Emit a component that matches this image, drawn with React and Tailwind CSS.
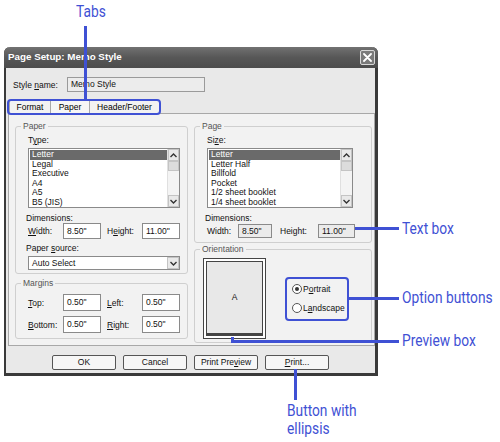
import React from 'react'

const BLUE = 'bg-[#3f51d4]'

function Label({ children, className = '' }) {
  return <span className={`text-[8.5px] leading-[10px] text-[#111] ${className}`}>{children}</span>
}

function Field({ value, w, h = 'h-[16px]', disabled = false }) {
  return (
    <div className={`${w} ${h} flex items-center px-[3px] border border-[#8a8a8a] text-[8.5px] text-[#111] ${disabled ? 'bg-[#ebebeb]' : 'bg-white'}`}>
      {value}
    </div>
  )
}

function Group({ title, className = '', children }) {
  return (
    <div className={`relative border border-[#cfcfcf] rounded-[3px] ${className}`}>
      <span className="absolute -top-[6px] left-[5px] px-[2px] bg-[#f2f2f2] text-[8.5px] leading-[10px] text-[#555]">{title}</span>
      {children}
    </div>
  )
}

function ListBox({ items, w }) {
  return (
    <div className={`${w} h-[60px] flex border border-[#8a8a8a] bg-white`}>
      <div className="flex-1 flex flex-col pt-[1px] pl-[1px]">
        {items.map((it, i) => (
          <div key={it} className={`h-[9.6px] leading-[9.6px] text-[8.5px] pl-[2px] ${i === 0 ? 'bg-[#6a6a6a] text-white' : 'text-[#111]'}`}>{it}</div>
        ))}
      </div>
      <div className="w-[12px] flex flex-col bg-[#f4f4f4] border-l border-[#e0e0e0]">
        <div className="h-[12px] flex items-center justify-center border border-[#c4c4c4] bg-[#e9e9e9]">
          <svg width="7" height="5" viewBox="0 0 7 5"><path d="M0.5 4 L3.5 1 L6.5 4" fill="none" stroke="#333" strokeWidth="1.4" /></svg>
        </div>
        <div className="h-[10px] border border-[#c4c4c4] bg-[#dcdcdc]" />
        <div className="flex-1" />
        <div className="h-[12px] flex items-center justify-center border border-[#c4c4c4] bg-[#e9e9e9]">
          <svg width="7" height="5" viewBox="0 0 7 5"><path d="M0.5 1 L3.5 4 L6.5 1" fill="none" stroke="#333" strokeWidth="1.4" /></svg>
        </div>
      </div>
    </div>
  )
}

function Radio({ checked, children }) {
  return (
    <div className="flex items-center gap-[1px] h-[12px]">
      <div className="w-[10px] h-[10px] rounded-full border border-[#555] bg-white flex items-center justify-center">
        {checked && <div className="w-[4px] h-[4px] rounded-full bg-[#333]" />}
      </div>
      <Label>{children}</Label>
    </div>
  )
}

function Btn({ children }) {
  return (
    <div className="w-[64px] h-[15px] flex items-center justify-center rounded-[2px] border border-[#555] bg-[#f6f6f6] text-[8.5px] text-[#111]">
      {children}
    </div>
  )
}

function Callout({ className, children }) {
  return (
    <div className={`absolute text-[16px] leading-[18px] text-[#3f51d4] scale-x-[0.86] origin-left whitespace-nowrap ${className}`} style={{ fontFamily: 'Roboto, sans-serif' }}>
      {children}
    </div>
  )
}

export default function App() {
  return (
    <div className="relative w-[500px] h-[442px] bg-white pt-[47px] pl-[4px] overflow-hidden" style={{ fontFamily: '"Liberation Sans", Arial, sans-serif' }}>
      {/* Dialog */}
      <div className="w-[374px] flex flex-col rounded-t-[6px] border-l-[2px] border-r-[3px] border-b-[3px] border-[#3a3a3a] bg-[#e9e9e9]">
        {/* Title bar */}
        <div className="h-[21px] -mx-[2px] -mr-[3px] flex items-center justify-between pl-[4px] pr-[3px] rounded-t-[6px] bg-gradient-to-b from-[#727272] via-[#575757] to-[#4c4c4c]">
          <span className="text-[9.8px] font-bold text-white">Page Setup: Memo Style</span>
          <div className="w-[15px] h-[15px] flex items-center justify-center rounded-[2px] border border-[#d8d8d8] bg-[#7a7a7a]">
            <svg width="9" height="9" viewBox="0 0 9 9"><path d="M1 1 L8 8 M8 1 L1 8" stroke="white" strokeWidth="1.8" strokeLinecap="round" /></svg>
          </div>
        </div>

        {/* Style name */}
        <div className="mt-[9px] h-[15px] flex items-center pl-[7px]">
          <Label className="w-[54px]">Style <u>n</u>ame:</Label>
          <div className="w-[138px] h-[15px] flex items-center px-[3px] border border-[#9a9a9a] bg-[#ececec] text-[8.5px] text-[#111]">Memo Style</div>
        </div>

        {/* Tabs */}
        <div className="mt-[8px] h-[13px] flex pl-[3px]">
          <div className="w-[41px] flex items-center justify-center border-t border-l border-[#a8a8a8] bg-[#f2f2f2] text-[8.5px]">Format</div>
          <div className="w-[39px] flex items-center justify-center border-t border-l border-[#a8a8a8] bg-[#f6f6f6] text-[8.5px]">Paper</div>
          <div className="w-[71px] flex items-center justify-center border-t border-x border-[#a8a8a8] bg-[#f2f2f2] text-[8.5px]">Header/Footer</div>
        </div>

        {/* Tab panel */}
        <div className="ml-[2px] h-[233px] flex gap-[6px] pl-[6px] pt-[12px] border border-[#a8a8a8] bg-[#f2f2f2]">
          {/* Left column */}
          <div className="w-[173px] flex flex-col">
            <Group title="Paper" className="h-[148px] flex flex-col pl-[12px] pt-[8px]">
              <Label>T<u>y</u>pe:</Label>
              <div className="mt-[3px]">
                <ListBox w="w-[152px]" items={['Letter', 'Legal', 'Executive', 'A4', 'A5', 'B5 (JIS)']} />
              </div>
              <Label className="mt-[5px] -ml-[2px]">Dimensions:</Label>
              <div className="h-[16px] flex items-center">
                <Label className="w-[35px]"><u>W</u>idth:</Label>
                <Field value={'8.50"'} w="w-[38px]" />
                <Label className="w-[41px] pl-[6px]">H<u>e</u>ight:</Label>
                <Field value={'11.00"'} w="w-[38px]" />
              </div>
              <Label className="mt-[4px] -ml-[2px]">Paper <u>s</u>ource:</Label>
              <div className="mt-[3px] w-[152px] h-[14px] flex items-center border border-[#8a8a8a] bg-white">
                <span className="flex-1 pl-[3px] text-[8.5px] text-[#111]">Auto Select</span>
                <div className="w-[12px] h-[12px] flex items-center justify-center border border-[#c4c4c4] bg-[#e9e9e9]">
                  <svg width="7" height="5" viewBox="0 0 7 5"><path d="M0.5 1 L3.5 4 L6.5 1" fill="none" stroke="#333" strokeWidth="1.4" /></svg>
                </div>
              </div>
            </Group>
            <Group title="Margins" className="mt-[9px] h-[56px] flex flex-col gap-[5px] pl-[12px] pt-[10px]">
              <div className="h-[17px] flex items-center">
                <Label className="w-[35px]"><u>T</u>op:</Label>
                <Field value={'0.50"'} w="w-[38px]" h="h-[17px]" />
                <Label className="w-[41px] pl-[6px]"><u>L</u>eft:</Label>
                <Field value={'0.50"'} w="w-[38px]" h="h-[17px]" />
              </div>
              <div className="h-[17px] flex items-center">
                <Label className="w-[35px]"><u>B</u>ottom:</Label>
                <Field value={'0.50"'} w="w-[38px]" h="h-[17px]" />
                <Label className="w-[41px] pl-[6px]"><u>R</u>ight:</Label>
                <Field value={'0.50"'} w="w-[38px]" h="h-[17px]" />
              </div>
            </Group>
          </div>

          {/* Right column */}
          <div className="w-[178px] flex flex-col">
            <Group title="Page" className="h-[117px] flex flex-col pl-[12px] pt-[8px]">
              <Label>Si<u>z</u>e:</Label>
              <div className="mt-[3px]">
                <ListBox w="w-[146px]" items={['Letter', 'Letter Half', 'Billfold', 'Pocket', '1/2 sheet booklet', '1/4 sheet booklet']} />
              </div>
              <Label className="mt-[5px] -ml-[2px]">Dimensions:</Label>
              <div className="mt-[1px] h-[14px] flex items-center">
                <Label className="w-[31px]">Width:</Label>
                <Field value={'8.50"'} w="w-[34px]" h="h-[14px]" disabled />
                <Label className="w-[46px] pl-[8px]">Height:</Label>
                <Field value={'11.00"'} w="w-[37px]" h="h-[14px]" disabled />
              </div>
            </Group>
            <Group title="Orientation" className="mt-[6px] h-[94px] flex pl-[8px] pt-[8px]">
              <div className="w-[63px] h-[81px] border border-[#444] bg-white p-[2px]">
                <div className="w-full h-full flex items-center justify-center border border-[#444] border-b-[3px] bg-[#e8e8e8] text-[8.5px] text-[#111]">A</div>
              </div>
              <div className="ml-[26px] mt-[25px] flex flex-col gap-[7px]">
                <Radio checked>P<u>o</u>rtrait</Radio>
                <Radio>L<u>a</u>ndscape</Radio>
              </div>
            </Group>
          </div>
        </div>

        {/* Buttons */}
        <div className="mt-[9px] mb-[3px] flex gap-[7px] pl-[46px]">
          <Btn>OK</Btn>
          <Btn>Cancel</Btn>
          <Btn>Print Pre<u>v</u>iew</Btn>
          <Btn><u>P</u>rint...</Btn>
        </div>
      </div>

      {/* Callouts */}
      <Callout className="left-[76px] top-[3px]">Tabs</Callout>
      <div className={`absolute left-[84px] top-[26px] w-[3px] h-[74px] ${BLUE}`} />
      <div className="absolute left-[7px] top-[99px] w-[154px] h-[16px] rounded-[4px] border-[2px] border-[#3f51d4]" />

      <div className={`absolute left-[355px] top-[227px] w-[44px] h-[3px] ${BLUE}`} />
      <Callout className="left-[402px] top-[220px]">Text box</Callout>

      <div className="absolute left-[285px] top-[277px] w-[64px] h-[44px] rounded-[4px] border-[2px] border-[#3f51d4]" />
      <div className={`absolute left-[348px] top-[297px] w-[51px] h-[3px] ${BLUE}`} />
      <Callout className="left-[402px] top-[289px]">Option buttons</Callout>

      <div className={`absolute left-[231px] top-[337px] w-[3px] h-[5px] ${BLUE}`} />
      <div className={`absolute left-[231px] top-[340px] w-[168px] h-[3px] ${BLUE}`} />
      <Callout className="left-[402px] top-[332px]">Preview box</Callout>

      <div className={`absolute left-[294px] top-[369px] w-[3px] h-[31px] ${BLUE}`} />
      <Callout className="left-[287px] top-[402px]">Button with<br />ellipsis</Callout>
    </div>
  )
}
